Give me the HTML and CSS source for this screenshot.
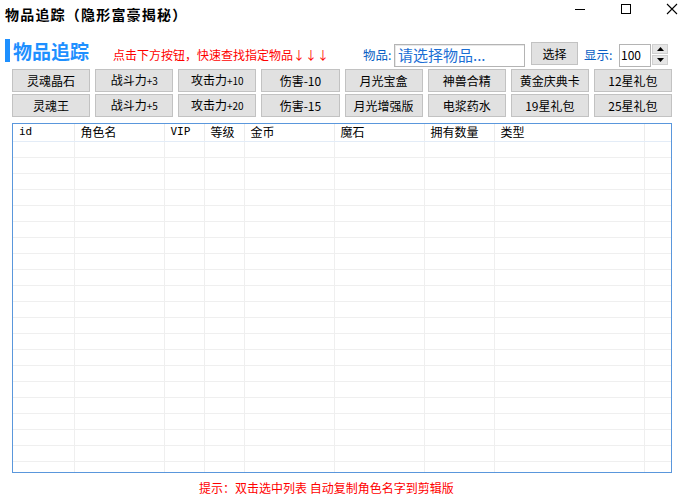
FILE: index.html
```html
<!DOCTYPE html>
<html lang="zh-CN">
<head>
<meta charset="utf-8">
<title>物品追踪</title>
<link rel="stylesheet" href="styles.css">
</head>
<body>
<div class="window">
  <header class="titlebar">
    <span class="title">物品追踪（隐形富豪揭秘）</span>
    <div class="controls">
      <svg class="ctl" width="46" height="28" viewBox="0 0 46 28"><path d="M18 9.5h10" stroke="#000" stroke-width="1"/></svg>
      <svg class="ctl" width="46" height="28" viewBox="0 0 46 28"><rect x="18.5" y="4.5" width="9" height="9" fill="none" stroke="#000" stroke-width="1"/></svg>
      <svg class="ctl" width="46" height="28" viewBox="0 0 46 28"><path d="M18 4l10 10M28 4L18 14" stroke="#000" stroke-width="1.1"/></svg>
    </div>
  </header>

  <div class="toolbar">
    <div class="heading"><span class="bar"></span><h1>物品追踪</h1></div>
    <span class="hint">点击下方按钮，快速查找指定物品↓↓↓</span>
    <span class="lbl lbl-item">物品:</span>
    <div class="input">请选择物品...</div>
    <button class="btn pick">选择</button>
    <span class="lbl lbl-show">显示:</span>
    <div class="num">100</div>
    <div class="spin">
      <span class="spin-btn"><svg width="7" height="4" viewBox="0 0 7 4"><path d="M3.5 0L7 4H0z" fill="#000"/></svg></span>
      <span class="spin-btn"><svg width="7" height="4" viewBox="0 0 7 4"><path d="M0 0h7L3.5 4z" fill="#000"/></svg></span>
    </div>
  </div>

  <div class="buttons">
    <button class="btn">灵魂晶石</button>
    <button class="btn">战斗力<span class="sm">+3</span></button>
    <button class="btn">攻击力<span class="sm">+10</span></button>
    <button class="btn">伤害-10</button>
    <button class="btn">月光宝盒</button>
    <button class="btn">神兽合精</button>
    <button class="btn">黄金庆典卡</button>
    <button class="btn">12星礼包</button>
    <button class="btn">灵魂王</button>
    <button class="btn">战斗力<span class="sm">+5</span></button>
    <button class="btn">攻击力<span class="sm">+20</span></button>
    <button class="btn">伤害-15</button>
    <button class="btn">月光增强版</button>
    <button class="btn">电浆药水</button>
    <button class="btn">19星礼包</button>
    <button class="btn">25星礼包</button>
  </div>

  <div class="list">
    <table>
      <colgroup>
        <col class="c-id"><col class="c-name"><col class="c-vip"><col class="c-lv"><col class="c-gold"><col class="c-stone"><col class="c-qty"><col class="c-type"><col>
      </colgroup>
      <thead>
        <tr><th class="mono">id</th><th>角色名</th><th class="mono">VIP</th><th>等级</th><th>金币</th><th>魔石</th><th>拥有数量</th><th>类型</th><th></th></tr>
      </thead>
      <tbody>
        <tr><td></td><td></td><td></td><td></td><td></td><td></td><td></td><td></td><td></td></tr>
        <tr><td></td><td></td><td></td><td></td><td></td><td></td><td></td><td></td><td></td></tr>
        <tr><td></td><td></td><td></td><td></td><td></td><td></td><td></td><td></td><td></td></tr>
        <tr><td></td><td></td><td></td><td></td><td></td><td></td><td></td><td></td><td></td></tr>
        <tr><td></td><td></td><td></td><td></td><td></td><td></td><td></td><td></td><td></td></tr>
        <tr><td></td><td></td><td></td><td></td><td></td><td></td><td></td><td></td><td></td></tr>
        <tr><td></td><td></td><td></td><td></td><td></td><td></td><td></td><td></td><td></td></tr>
        <tr><td></td><td></td><td></td><td></td><td></td><td></td><td></td><td></td><td></td></tr>
        <tr><td></td><td></td><td></td><td></td><td></td><td></td><td></td><td></td><td></td></tr>
        <tr><td></td><td></td><td></td><td></td><td></td><td></td><td></td><td></td><td></td></tr>
        <tr><td></td><td></td><td></td><td></td><td></td><td></td><td></td><td></td><td></td></tr>
        <tr><td></td><td></td><td></td><td></td><td></td><td></td><td></td><td></td><td></td></tr>
        <tr><td></td><td></td><td></td><td></td><td></td><td></td><td></td><td></td><td></td></tr>
        <tr><td></td><td></td><td></td><td></td><td></td><td></td><td></td><td></td><td></td></tr>
        <tr><td></td><td></td><td></td><td></td><td></td><td></td><td></td><td></td><td></td></tr>
        <tr><td></td><td></td><td></td><td></td><td></td><td></td><td></td><td></td><td></td></tr>
        <tr><td></td><td></td><td></td><td></td><td></td><td></td><td></td><td></td><td></td></tr>
        <tr><td></td><td></td><td></td><td></td><td></td><td></td><td></td><td></td><td></td></tr>
        <tr><td></td><td></td><td></td><td></td><td></td><td></td><td></td><td></td><td></td></tr>
        <tr><td></td><td></td><td></td><td></td><td></td><td></td><td></td><td></td><td></td></tr>
        <tr><td></td><td></td><td></td><td></td><td></td><td></td><td></td><td></td><td></td></tr>
      </tbody>
    </table>
  </div>

  <p class="footer">提示：双击选中列表 自动复制角色名字到剪辑版</p>
</div>
</body>
</html>
```

FILE: styles.css
```css
* { box-sizing: border-box; }

html, body {
  margin: 0;
  padding: 0;
  background: #ffffff;
}

body {
  font-family: "Noto Sans CJK SC", "Noto Sans", sans-serif;
  font-size: 12px;
  color: #000;
}

.window {
  width: 689px;
  height: 500px;
  overflow: hidden;
  background: #fff;
}

/* title bar */
.titlebar {
  height: 28px;
  display: flex;
  align-items: center;
  justify-content: space-between;
}

.title {
  margin-left: 5px;
  font-size: 14px;
  font-weight: 700;
  line-height: 16px;
  letter-spacing: 1.2px;
}

.controls {
  display: flex;
  align-self: flex-start;
  margin-right: -6px;
}

.ctl { display: block; }

/* toolbar */
.toolbar {
  margin-top: 15px;
  height: 24px;
  display: flex;
  align-items: center;
}

.heading {
  align-self: flex-start;
  margin-top: -4px;
  margin-left: 5px;
  display: flex;
  align-items: center;
  height: 23px;
}

.bar {
  width: 5px;
  height: 23px;
  background: #1e90ff;
}

.heading h1 {
  margin: 0 0 0 3px;
  font-size: 19px;
  line-height: 22px;
  font-weight: 700;
  color: #1e90ff;
}

.hint {
  margin-left: 24px;
  color: #ff0000;
  font-size: 12px;
  line-height: 14px;
  width: 215px;
  white-space: nowrap;
}

.lbl {
  color: #0a5fc4;
  font-size: 12.5px;
  line-height: 14px;
  white-space: nowrap;
}

.lbl-item { margin-left: 35px; width: 31px; }
.lbl-show { margin-left: 6px; width: 35px; }

.input {
  width: 131px;
  height: 23px;
  border: 1px solid #b4b4b4;
  box-shadow: inset 1px 1px 0 #e8e8e8;
  color: #1a6ed4;
  font-size: 15px;
  line-height: 20px;
  padding-left: 3px;
  white-space: nowrap;
  overflow: hidden;
}

.btn {
  font-family: inherit;
  font-size: 12px;
  line-height: 14px;
  color: #000;
  background: #e1e1e1;
  border: 1px solid #c2c2c2;
  padding: 0;
  margin: 0;
  white-space: nowrap;
}

.pick {
  margin-left: 6px;
  width: 47px;
  height: 23px;
  align-self: flex-start;
  margin-top: -1px;
}

.num {
  width: 32px;
  height: 23px;
  border: 1px solid #b4b4b4;
  font-size: 12px;
  line-height: 20px;
  padding-left: 1px;
}

.spin {
  margin-left: 1px;
  display: flex;
  flex-direction: column;
  gap: 1px;
  height: 22px;
}

.spin-btn {
  width: 16px;
  height: 10px;
  background: #e6e6e6;
  border: 1px solid #d0d0d0;
  display: flex;
  align-items: center;
  justify-content: center;
}

.spin-btn svg { display: block; }

/* button grid */
.buttons {
  margin: 2px 17px 0 12px;
  display: grid;
  grid-template-columns: repeat(8, 1fr);
  grid-auto-rows: 23px;
  column-gap: 5px;
  row-gap: 2px;
}

.buttons .btn { height: 23px; }

.sm { font-size: 10px; }

/* list */
.list {
  margin: 6px 17px 0 12px;
  height: 350px;
  border: 1px solid #5a97dc;
  overflow: hidden;
}

table {
  width: 100%;
  border-collapse: collapse;
  table-layout: fixed;
}

.c-id { width: 61px; }
.c-name { width: 90px; }
.c-vip { width: 40px; }
.c-lv { width: 40px; }
.c-gold { width: 90px; }
.c-stone { width: 90px; }
.c-qty { width: 70px; }
.c-type { width: 150px; }

th {
  height: 17px;
  padding: 0 0 0 6px;
  text-align: left;
  font-weight: 400;
  font-size: 12px;
  line-height: 14px;
  border-right: 1px solid #ececec;
  border-bottom: 1px solid #e3ecf7;
  white-space: nowrap;
}

th.mono {
  font-family: "DejaVu Sans Mono", "Liberation Mono", monospace;
  font-size: 11px;
}

td {
  height: 16px;
  padding: 0;
  border-right: 1px solid #efefef;
  border-bottom: 1px solid #efefef;
}

th:last-child, td:last-child { border-right: none; }

.footer {
  margin: 7px 0 0 199px;
  color: #ff0000;
  font-size: 12px;
  line-height: 16px;
}
```
